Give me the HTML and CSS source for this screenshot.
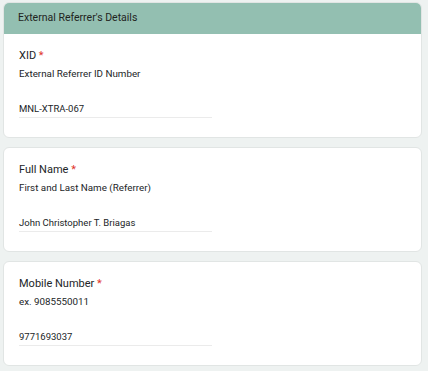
FILE: index.html
```html
<!DOCTYPE html>
<html>
<head>
<meta charset="utf-8">
<link rel="stylesheet" href="styles.css">
</head>
<body>
<div class="page">
  <section class="card">
    <div class="card-header">External Referrer's Details</div>
    <div class="card-body">
      <div class="label">XID <span class="req">*</span></div>
      <div class="desc">External Referrer ID Number</div>
      <div class="value">MNL-XTRA-067</div>
    </div>
  </section>
  <section class="card">
    <div class="card-body">
      <div class="label">Full Name <span class="req">*</span></div>
      <div class="desc">First and Last Name (Referrer)</div>
      <div class="value">John Christopher T. Briagas</div>
    </div>
  </section>
  <section class="card">
    <div class="card-body">
      <div class="label">Mobile Number <span class="req">*</span></div>
      <div class="desc">ex. 9085550011</div>
      <div class="value">9771693037</div>
    </div>
  </section>
</div>
</body>
</html>
```
FILE: styles.css
```css
html, body {
  margin: 0;
  padding: 0;
  background: #eef2f1;
}
body {
  font-family: Roboto, "Liberation Sans", sans-serif;
  color: #222527;
}
.page {
  display: flex;
  flex-direction: column;
  gap: 9px;
  padding: 2px 6px 0 3px;
}
.card {
  background: #fff;
  border: 1px solid #e1e5e4;
  border-radius: 6px;
  overflow: hidden;
}
.card-header {
  background: #93bfb1;
  height: 31px;
  line-height: 30px;
  padding-left: 15px;
  font-size: 10.5px;
  color: #1f2421;
  margin: -1px -1px 0 -1px;
  padding-top: 1px;
}
.card-body {
  padding: 14px 15px 19px 15px;
  display: flex;
  flex-direction: column;
}
.label {
  font-size: 11px;
  line-height: 16px;
}
.req {
  color: #e0342b;
}
.desc {
  font-size: 9.8px;
  line-height: 16px;
  margin-top: 2px;
}
.value {
  margin-top: 18px;
  width: 193px;
  font-size: 9.5px;
  line-height: 17px;
  border-bottom: 1px solid #ebebeb;
}
```
